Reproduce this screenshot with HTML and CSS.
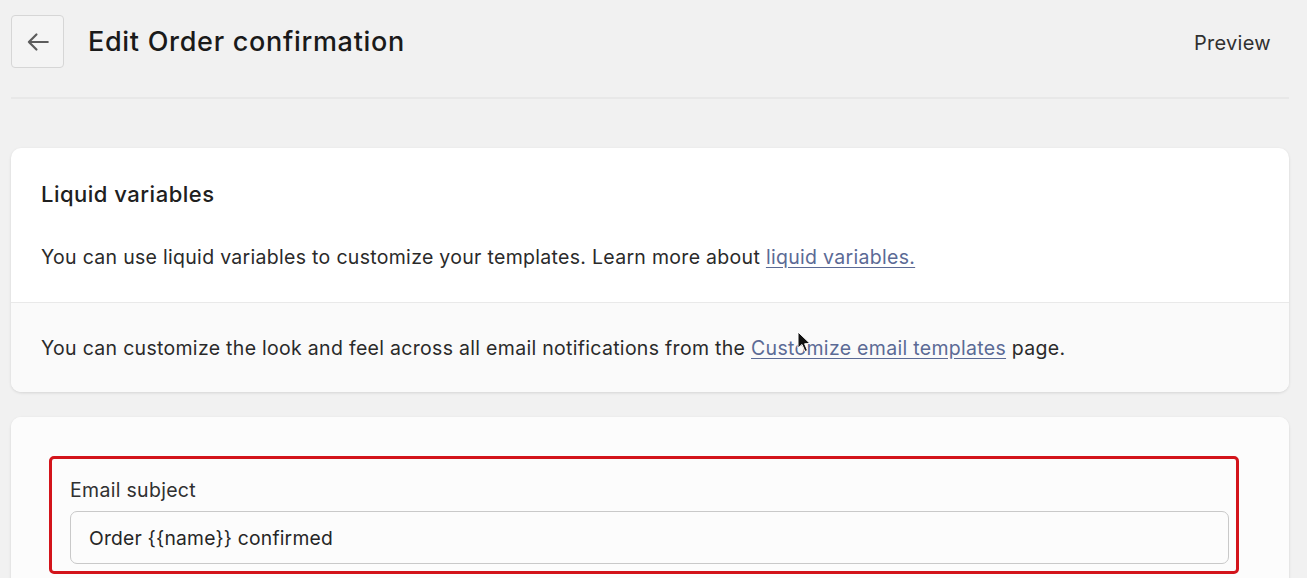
FILE: index.html
```html
<!DOCTYPE html>
<html lang="en">
<head>
    <meta charset="UTF-8">
    <title>Edit Order confirmation</title>
    <link rel="stylesheet" href="styles.css">
</head>
<body>
<div class="page">
    <div class="page-header">
        <button class="back-btn" aria-label="Back">
            <svg width="26" height="26" viewBox="0 0 20 20"><path d="M17.5 10H3M8.8 4.2L3 10 8.8 15.8" fill="none" stroke="#5c5c5c" stroke-width="1.7" stroke-linecap="round" stroke-linejoin="round"/></svg>
        </button>
        <h1 class="page-title">Edit Order confirmation</h1>
        <a class="preview-link">Preview</a>
    </div>

    <div class="card">
        <div class="card-section">
            <h2 class="card-title">Liquid variables</h2>
            <p class="card-text">You can use liquid variables to customize your templates. Learn more about <a class="link">liquid variables.</a></p>
        </div>
        <div class="card-section subdued">
            <p class="card-text">You can customize the look and feel across all email notifications from the <a class="link">Customize email templates</a> page.</p>
            <svg class="cursor" width="14" height="22" viewBox="0 0 14 22"><path d="M1 1L1 17 5 13.5 8 20.5 10.5 19.5 7.6 12.8 13 12.5Z" fill="#111" stroke="#fff" stroke-width="1"/></svg>
        </div>
    </div>

    <div class="card">
        <div class="card-section form-section">
            <div class="highlight">
                <label class="field-label">Email subject</label>
                <div class="text-field">Order {{name}} confirmed</div>
            </div>
        </div>
    </div>
</div>
</body>
</html>
```

FILE: styles.css
```css
*{
    margin: 0;
    padding: 0;
    box-sizing: border-box;
}
html,body{
    height: 100%;
    overflow: hidden;
}
body{
    background: #f1f1f1;
    font-family: Inter, "Liberation Sans", sans-serif;
    color: #202020;
}
.page{
    padding: 0 18px 0 11px;
}
.page-header{
    display: flex;
    align-items: center;
    height: 99px;
    padding-bottom: 14px;
    border-bottom: 2px solid #e8e8e8;
}
.back-btn{
    width: 53px;
    height: 53px;
    border: 1px solid #d6d6d6;
    border-radius: 4px;
    background: #f4f4f4;
    display: flex;
    align-items: center;
    justify-content: center;
}
.page-title{
    font-size: 27px;
    font-weight: 500;
    margin-left: 24px;
    flex: 1;
    color: #1a1a1a;
    letter-spacing: 0.7px;
}
.preview-link{
    font-size: 20px;
    letter-spacing: 0.3px;
    color: #303030;
    margin-right: 18px;
    margin-top: 2px;
}
.card{
    background: #fff;
    border-radius: 10px;
    box-shadow: 0 1px 3px rgba(0,0,0,0.12);
    margin-top: 49px;
    overflow: hidden;
}
.card + .card{
    margin-top: 25px;
}
.card-section{
    padding: 32px 30px 31px;
    position: relative;
}
.card-section + .card-section{
    border-top: 1px solid #e9e9e9;
}
.subdued{
    background: #fafafa;
    padding: 31px 30px 30px;
}
.card-title{
    font-size: 22px;
    font-weight: 500;
    line-height: 28px;
    letter-spacing: 0.5px;
    margin-bottom: 35px;
}
.card-text{
    font-size: 19.5px;
    letter-spacing: 0.3px;
    line-height: 28px;
    color: #2a2a2a;
}
.link{
    color: #5b6a95;
    text-decoration: underline;
    text-underline-offset: 3px;
}
.cursor{
    position: absolute;
    left: 786px;
    top: 28px;
}
.form-section{
    padding: 39px 50px 20px 38px;
    background: #fcfcfc;
}
.highlight{
    border: 3px solid #d3141b;
    border-radius: 5px;
    padding: 19px 7px 7px 18px;
}
.field-label{
    display: block;
    font-size: 19.5px;
    letter-spacing: 0.3px;
    line-height: 24px;
    color: #303030;
    margin-bottom: 9px;
}
.text-field{
    height: 53px;
    border: 1.5px solid #c9c9c9;
    border-radius: 7px;
    padding: 0 18px;
    display: flex;
    align-items: center;
    font-size: 19.3px;
    letter-spacing: 0.2px;
    color: #262626;
}
```
